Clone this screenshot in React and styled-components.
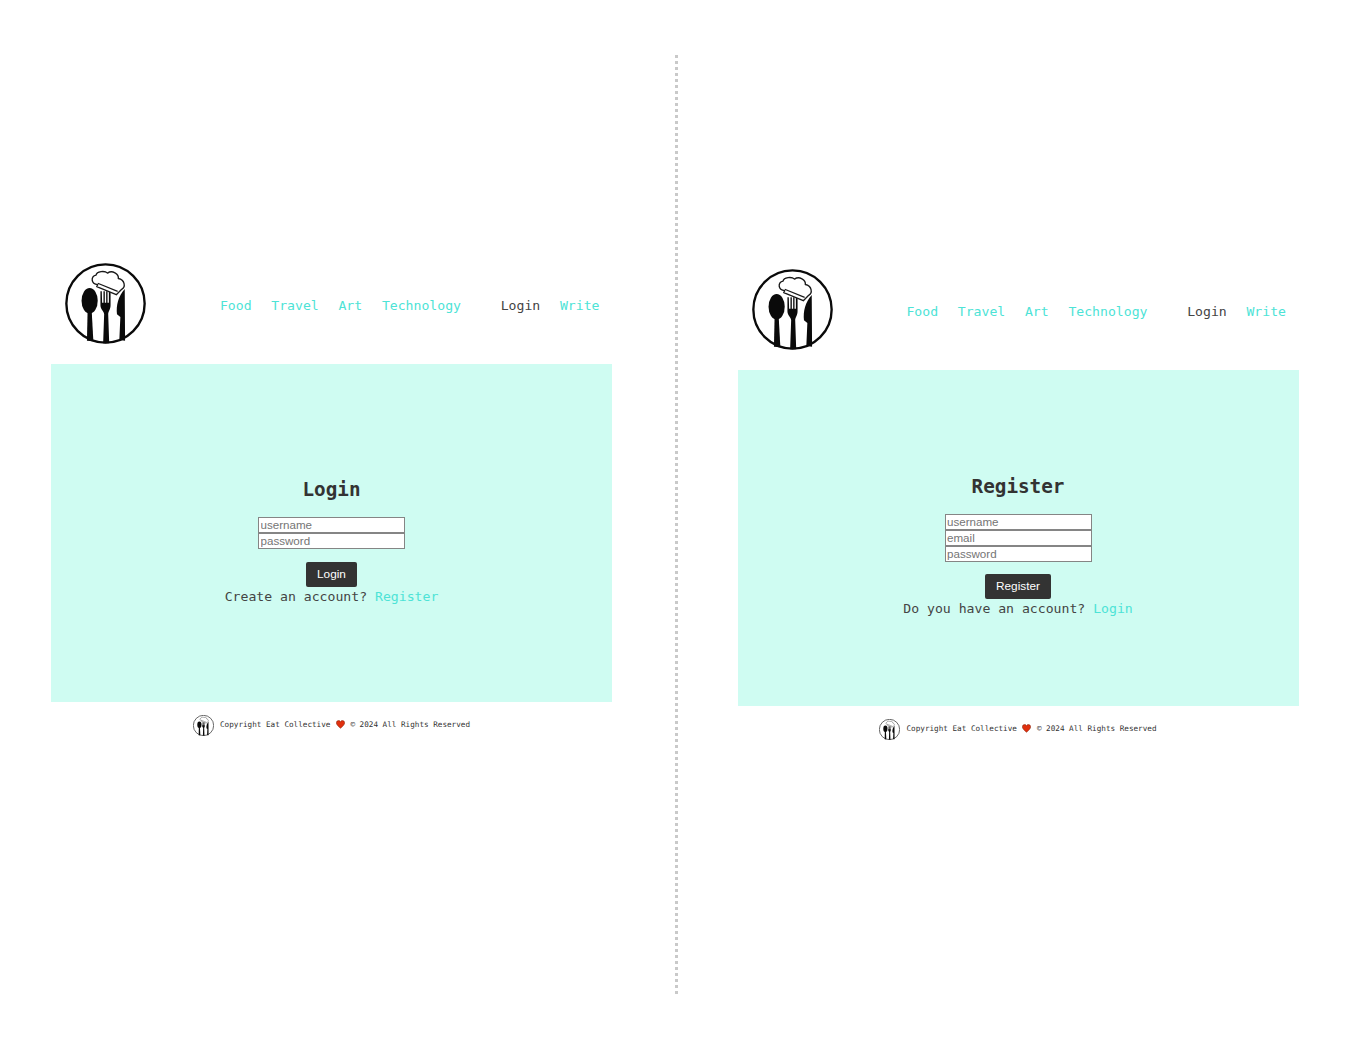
import React from 'react';
import styled, { createGlobalStyle } from 'styled-components';

const GlobalStyle = createGlobalStyle`
  html, body {
    margin: 0;
    padding: 0;
    background: #fff;
  }
  body {
    font-family: "DejaVu Sans Mono", "Liberation Mono", monospace;
    color: #333;
  }
`;

const NAV_ITEMS = ['Food', 'Travel', 'Art', 'Technology'];

const Logo = ({ size }) => (
  <svg width={size} height={size} viewBox="0 0 240 240" aria-hidden="true">
    <circle cx="120" cy="120" r="116" fill="#fff" stroke="#0a0a0a" strokeWidth="7" />
    {/* spoon */}
    <ellipse cx="73" cy="112" rx="24" ry="38" fill="#0a0a0a" />
    <path d="M67 140 L79 140 L84 232 L65 230 Z" fill="#0a0a0a" />
    {/* fork */}
    <path d="M105 84 L109 84 L110 118 L114 118 L114 84 L118 84 L118 118 L122 118 L122 84 L126 84 L126 118 L130 118 L130 84 L135 84 L135 125 C135 138 128 142 128 152 L131 238 L113 238 L116 152 C116 142 105 138 105 125 Z" fill="#0a0a0a" />
    {/* knife */}
    <path d="M177 77 L178 230 L161 228 L164 160 L154 152 C151 125 158 98 177 77 Z" fill="#0a0a0a" />
    {/* chef hat */}
    <path d="M97 64 C76 62 76 40 92 36 C94 24 118 22 126 30 C140 20 160 32 158 46 C178 50 180 72 168 78 L152 94 L94 70 Z" fill="#fff" stroke="#1a1a1a" strokeWidth="4" strokeLinejoin="round" />
    <path d="M97 60 L156 84" stroke="#1a1a1a" strokeWidth="3.5" fill="none" />
  </svg>
);

const Heart = () => (
  <svg width="9" height="9" viewBox="0 0 24 24" aria-hidden="true">
    <path d="M12 22 C5 16 1 12 1 7.5 C1 3.5 4 1.5 7 1.5 C9 1.5 11 2.5 12 5 C13 2.5 15 1.5 17 1.5 C20 1.5 23 3.5 23 7.5 C23 12 19 16 12 22 Z" fill="#e0300f" stroke="#8a2a14" strokeWidth="1.5" />
  </svg>
);

const Page = styled.div`
  display: flex;
  align-items: flex-start;
  width: 1350px;
  height: 1050px;
  overflow: hidden;
`;

const Side = styled.section`
  width: 561px;
  flex: none;
  display: flex;
  flex-direction: column;
  margin-top: ${(p) => p.$top}px;
  margin-left: ${(p) => p.$left}px;
  margin-right: ${(p) => p.$right}px;
`;

const Divider = styled.div`
  flex: none;
  width: 3px;
  height: 940px;
  margin-top: 55px;
  background: repeating-linear-gradient(to bottom, #c9c9c9 0, #c9c9c9 3px, transparent 3px, transparent 6px);
`;

const Navbar = styled.header`
  display: flex;
  align-items: center;
  justify-content: space-between;
  height: 81px;
  margin-bottom: 20px;
  padding: 0 12.5px 0 14px;
`;

const NavLinks = styled.nav`
  display: flex;
  gap: 19.7px;
  padding-top: 4px;
  font-size: 13.15px;
`;

const NavLink = styled.a`
  color: ${(p) => (p.$dark ? '#444' : '#4de3d6')};
  margin-left: ${(p) => (p.$spaced ? '20px' : '0')};
  cursor: pointer;
`;

const Panel = styled.main`
  display: flex;
  flex-direction: column;
  align-items: center;
  box-sizing: border-box;
  height: ${(p) => p.$height}px;
  padding-top: ${(p) => p.$pad}px;
  background: #cffcf2;
`;

const Title = styled.h1`
  margin: 0 0 15px;
  font-size: 19.3px;
  line-height: 24px;
  font-weight: 700;
  color: #333;
`;

const Form = styled.form`
  display: flex;
  flex-direction: column;
  align-items: center;
`;

const Input = styled.input`
  box-sizing: border-box;
  display: block;
  width: 147px;
  height: 16px;
  padding: 0 1.5px 2px;
  border: 1px solid #858585;
  border-radius: 0;
  outline: none;
  background: #fff;
  font-family: "Liberation Sans", Arial, sans-serif;
  font-size: 11.6px;

  &::placeholder {
    color: #757575;
    opacity: 1;
  }
`;

const Button = styled.button`
  margin-top: ${(p) => p.$top}px;
  height: 24.5px;
  padding: 0 11px;
  border: none;
  border-radius: 2px;
  background: #333;
  color: #fff;
  font-family: "Liberation Sans", Arial, sans-serif;
  font-size: 11.8px;
  cursor: pointer;
`;

const Prompt = styled.p`
  margin: ${(p) => p.$gap}px 0 0;
  font-size: 13.15px;
  line-height: 16px;
  color: #444;
`;

const PromptLink = styled.a`
  color: #4de3d6;
  cursor: pointer;
`;

const Footer = styled.footer`
  display: flex;
  align-items: center;
  justify-content: center;
  gap: 6px;
  margin-top: 13px;
  height: 20px;
  font-size: 7.65px;
  color: #333;
`;

const FooterText = styled.span`
  display: flex;
  align-items: center;
  gap: 5.5px;
  padding-bottom: 2px;
`;

const Navigation = () => (
  <Navbar>
    <Logo size={81} />
    <NavLinks>
      {NAV_ITEMS.map((item) => (
        <NavLink key={item}>{item}</NavLink>
      ))}
      <NavLink $dark $spaced>Login</NavLink>
      <NavLink>Write</NavLink>
    </NavLinks>
  </Navbar>
);

const PageFooter = () => (
  <Footer>
    <Logo size={21} />
    <FooterText>
      <span>Copyright Eat Collective</span>
      <Heart />
      <span>© 2024 All Rights Reserved</span>
    </FooterText>
  </Footer>
);

const AuthSide = ({ top, left, right, height, pad, btnTop, gap, title, fields, question, linkText }) => (
  <Side $top={top} $left={left} $right={right}>
    <Navigation />
    <Panel $height={height} $pad={pad}>
      <Title>{title}</Title>
      <Form onSubmit={(e) => e.preventDefault()}>
        {fields.map((field) => (
          <Input key={field} placeholder={field} type="text" />
        ))}
        <Button $top={btnTop}>{title}</Button>
      </Form>
      <Prompt $gap={gap}>
        {question} <PromptLink>{linkText}</PromptLink>
      </Prompt>
    </Panel>
    <PageFooter />
  </Side>
);

export default function App() {
  return (
    <>
      <GlobalStyle />
      <Page>
        <AuthSide
          top={263}
          left={51}
          right={63}
          height={338}
          pad={114}
          btnTop={13}
          gap={2}
          title="Login"
          fields={['username', 'password']}
          question="Create an account?"
          linkText="Register"
        />
        <Divider />
        <AuthSide
          top={269}
          left={59.5}
          right={0}
          height={336}
          pad={105}
          btnTop={12}
          gap={2}
          title="Register"
          fields={['username', 'email', 'password']}
          question="Do you have an account?"
          linkText="Login"
        />
      </Page>
    </>
  );
}
